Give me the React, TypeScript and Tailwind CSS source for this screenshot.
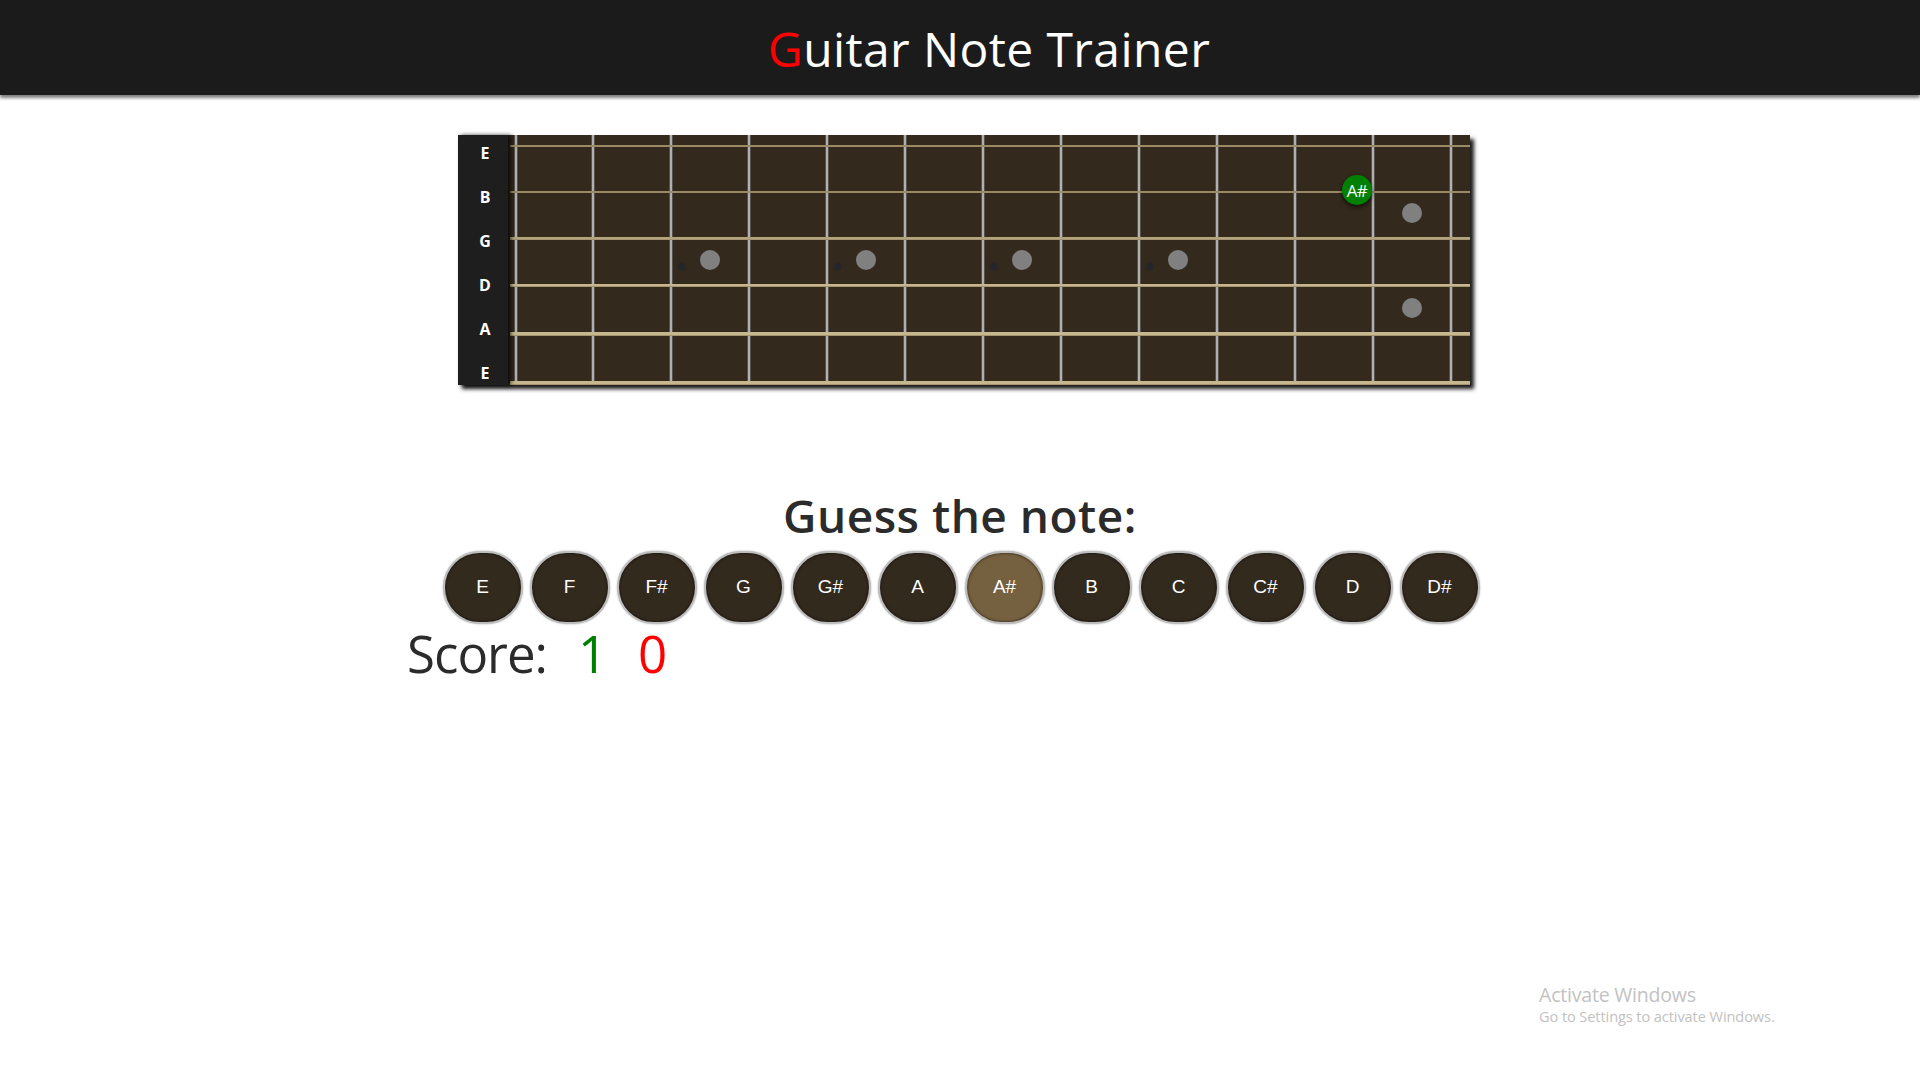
import React from "react";

const NOTES = ["E", "F", "F#", "G", "G#", "A", "A#", "B", "C", "C#", "D", "D#"];
const STRING_LABELS = ["E", "B", "G", "D", "A", "E"];
const FRETS = [8, 85, 163, 241, 319, 397, 475, 553, 631, 709, 787, 865, 943];
const STRINGS = [
  { y: 10, h: 2, c: "#9b8b65" },
  { y: 56, h: 2, c: "#9b8b65" },
  { y: 102, h: 3, c: "#b3a47d" },
  { y: 149, h: 3, c: "#c6b78e" },
  { y: 197, h: 4, c: "#c6b78e" },
  { y: 246, h: 4, c: "#c6b78e" },
];
const DOTS = [
  { x: 202, y: 125 },
  { x: 358, y: 125 },
  { x: 514, y: 125 },
  { x: 670, y: 125 },
  { x: 904, y: 78 },
  { x: 904, y: 173 },
];
const SMALL_DOTS = [174, 330, 486, 642];

function Fretboard() {
  return (
    <svg width={962} height={250} className="block">
      <rect x={0} y={0} width={962} height={250} fill="#33291d" />
      {FRETS.map((x) => (
        <g key={x}>
          <rect x={x - 1.5} y={0} width={3} height={250} fill="#7d7d7d" />
          <rect x={x - 0.5} y={0} width={1} height={250} fill="#e4e4e4" />
        </g>
      ))}
      {STRINGS.map((s, i) => (
        <g key={i}>
          <rect x={2} y={s.y} width={960} height={s.h} fill={s.c} />
          {s.h >= 3 && <rect x={2} y={s.y + s.h - 1} width={960} height={1} fill="#a49470" />}
        </g>
      ))}
      {SMALL_DOTS.map((x) => (
        <circle key={x} cx={x} cy={132} r={4} fill="#26262a" />
      ))}
      {DOTS.map((d, i) => (
        <circle key={i} cx={d.x} cy={d.y} r={10} fill="#808080" />
      ))}
    </svg>
  );
}

export default function App() {
  return (
    <div className="relative min-h-screen bg-white font-['Open_Sans','Noto_Sans',sans-serif]">
      <header className="h-[95px] bg-[#1b1b1b] flex items-center justify-center pl-[58px] shadow-[0_3px_3px_rgba(0,0,0,0.5)]">
        <h1 className="text-[48px] leading-none text-white font-normal tracking-[0.4px] mt-[2px]">
          <span className="text-[#ff0000]">G</span>uitar Note Trainer
        </h1>
      </header>

      <div className="flex justify-center mt-[40px] pl-2">
        <div className="flex shadow-[4px_4px_4px_rgba(0,0,0,0.9)]">
          <div className="relative z-10 w-[50px] h-[250px] bg-[#1e1e1e] shadow-[3px_0_4px_rgba(0,0,0,0.7)] flex flex-col items-center">
            <div className="-mt-[4px] flex flex-col items-center">
              {STRING_LABELS.map((l, i) => (
                <div key={i} className="h-[44px] flex items-center text-white text-[16px] font-bold leading-none pl-1">
                  {l}
                </div>
              ))}
            </div>
          </div>
          <div className="relative w-[962px] h-[250px]">
            <Fretboard />
            <div className="absolute left-[834px] top-[40px] w-[30px] h-[30px] rounded-full bg-[#008000] shadow-[0_2px_4px_rgba(0,0,0,0.7)] flex items-center justify-center text-white text-[17px] leading-none tracking-[-0.5px]">
              A#
            </div>
          </div>
        </div>
      </div>

      <h2 className="mt-[107px] text-center text-[46px] leading-none font-semibold text-[#2b2b2b] tracking-[0.5px]">
        Guess the note:
      </h2>

      <div className="mt-[13px] flex justify-center gap-[7px] pl-[2px]">
        {NOTES.map((n) => (
          <button
            key={n}
            className={
              "w-[80px] h-[73px] rounded-full border-2 border-[#bdbdbd] shadow-[0_0_2px_rgba(0,0,0,0.35),inset_0_0_3px_rgba(0,0,0,0.7)] flex items-center justify-center text-white text-[19px] font-['Liberation_Sans',Arial,sans-serif] " +
              (n === "A#" ? "bg-[#75603f]" : "bg-[#332a1e]")
            }
          >
            {n}
          </button>
        ))}
      </div>

      <div className="mt-[4px] ml-[407px] flex items-baseline text-[51px] leading-none font-medium">
        <span className="w-[171px] text-[#2b2b2b] tracking-[-1px]">Score:</span>
        <span className="w-[60px] text-[#008000] font-normal">1</span>
        <span className="text-[#ff0000] font-normal">0</span>
      </div>

      <div className="absolute left-[1539px] top-[983px] text-[#c2c2c2] font-['Open_Sans',sans-serif]">
        <div className="text-[19.5px] leading-[24px] tracking-[-0.2px]">Activate Windows</div>
        <div className="text-[14.6px] leading-[19px] tracking-[-0.1px]">Go to Settings to activate Windows.</div>
      </div>
    </div>
  );
}
